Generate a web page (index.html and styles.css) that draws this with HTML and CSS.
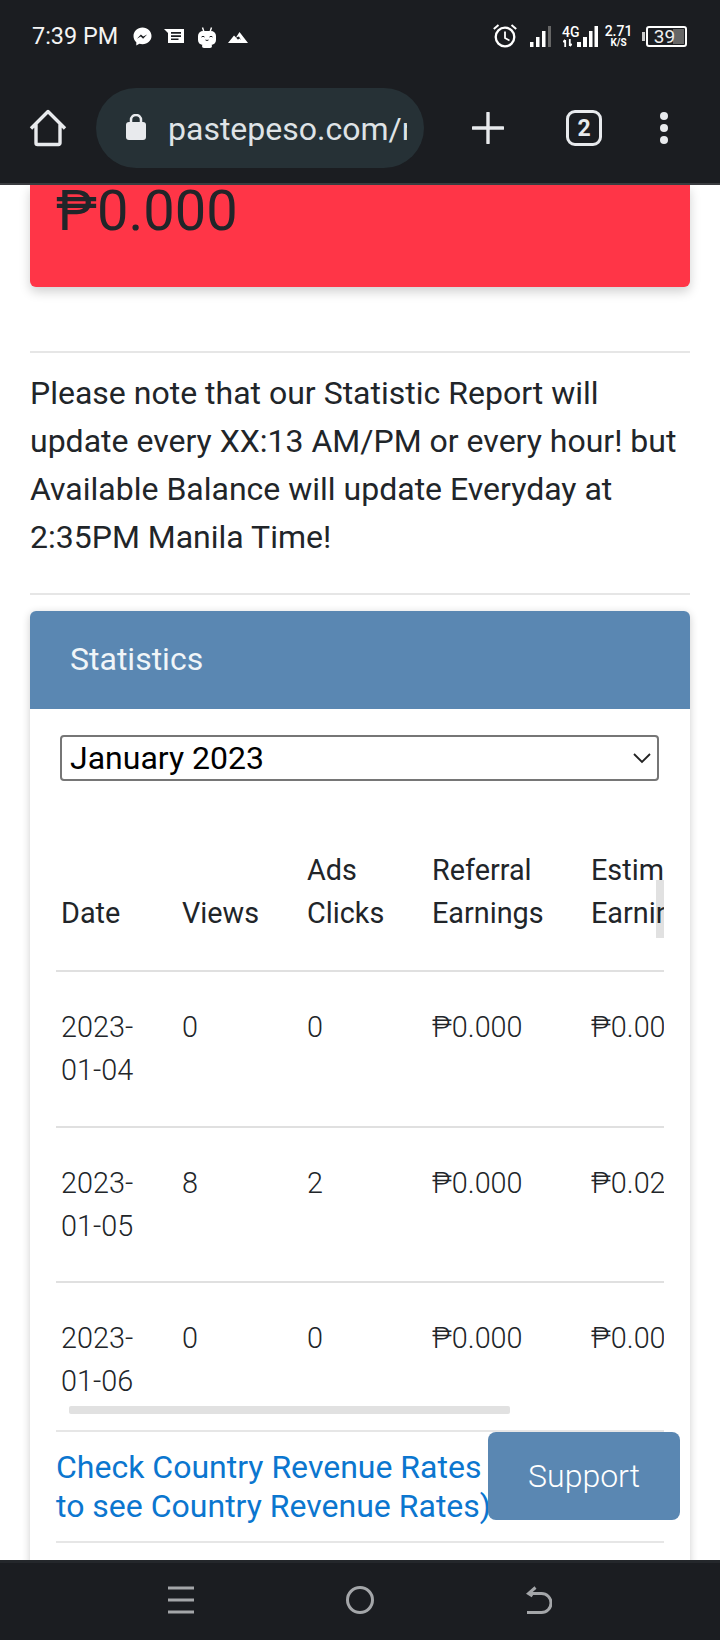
FILE: index.html
```html
<!DOCTYPE html>
<html lang="en">
  <head>
    <meta charset="UTF-8" />
    <meta name="viewport" content="width=device-width, initial-scale=1.0" />
    <title>statistics</title>
    <link rel="stylesheet" href="styles.css">
  </head>
  <body>
    <header class="chrome">
      <div class="status">
        <div class="status-left">
          <span class="clock">7:39 PM</span>
          <svg class="ic-messenger" width="19" height="19" viewBox="0 0 19 19"><path fill="#fff" d="M9.500 .5C4.400 .5 .5 4.200 .5 9c0 2.500 1 4.700 2.800 6.200v3.300l3.100-1.700c1 .3 2 .4 3.100 .4 5.100 0 9-3.700 9-8.200S14.600 .5 9.500 .5z"/><path fill="#1b1d21" d="M3.900 11.700l4-4.300 2.300 2.200 3.900-2.200-4 4.300-2.300-2.200z"/></svg>
          <svg class="ic-news" width="20" height="14" viewBox="0 0 20 14"><path fill="#fff" d="M0 0h20v14H4V4z"/><path fill="#1b1d21" d="M7 3h10v1.700H7zM7 6.200h10v1.700H7zM7 9.400h7.500v1.700H7z"/></svg>
          <svg class="ic-bot" width="18" height="21" viewBox="0 0 18 21"><path fill="none" stroke="#fff" stroke-width="1.400" d="M6 5L4.500 .5M12 5l1.500-4.500"/><rect fill="#fff" y="4" width="18" height="14" rx="5"/><rect fill="#fff" x="4" y="17" width="10" height="4" rx="2"/><path fill="none" stroke="#1b1d21" stroke-width="1" d="M3.500 10q1.500-1.500 3 0M11.500 10q1.500-1.500 3 0M7.500 13q1.500 1 3 0"/></svg>
          <svg class="ic-hills" width="20" height="11" viewBox="0 0 20 11"><path fill="#fff" d="M0 11L6 3.500 8 5.500 11.500 0 20 11z"/><path fill="#1b1d21" d="M8 5.500l2 2.300 1.300-1.300 1.700 1.500-2-3.500z"/></svg>
        </div>
        <div class="status-right">
          <svg class="ic-alarm" width="24" height="24" viewBox="0 0 24 24"><circle cx="12" cy="13" r="9.300" fill="none" stroke="#fff" stroke-width="2.300"/><path fill="none" stroke="#fff" stroke-width="1.800" d="M12 7.500V14l4.500 2.500"/><path fill="none" stroke="#fff" stroke-width="2" d="M.8 5L5.500 1M23.200 5L18.500 1"/></svg>
          <svg class="ic-signal" width="21" height="21" viewBox="0 0 21 21"><rect fill="#fff" x="0" y="16" width="3.500" height="5"/><rect fill="#fff" x="6" y="11" width="3.500" height="10"/><rect fill="#fff" x="12" y="5" width="3.500" height="16"/><rect fill="#666" x="18" y="0" width="3" height="21"/></svg>
          <div class="net">
            <span class="net-type">4G</span>
            <svg class="net-arrows" width="9" height="8" viewBox="0 0 9 8"><path fill="none" stroke="#fff" stroke-width="1.800" d="M2.200 8V1M.2 3L2.200 1M6.800 0v7M8.800 5L6.800 7"/></svg>
          </div>
          <svg class="ic-signal2" width="21" height="21" viewBox="0 0 21 21"><rect fill="#fff" x="0" y="16" width="4" height="5"/><rect fill="#fff" x="6" y="11" width="4" height="10"/><rect fill="#fff" x="12" y="5" width="3.500" height="16"/><rect fill="#fff" x="17.500" y="0" width="3.500" height="21"/></svg>
          <div class="speed"><span>2.71</span><span class="speed-unit">K/S</span></div>
          <div class="battery"><span class="battery-fill"></span><span class="battery-num">39</span></div>
        </div>
      </div>
      <div class="toolbar">
        <svg class="tool-home" width="38" height="38" viewBox="0 0 38 38"><path fill="none" stroke="#e8eaed" stroke-width="3.400" stroke-linejoin="round" d="M2 19.500L19 2.500l17 17M7 15.500V34a1.500 1.500 0 0 0 1.500 1.500h21a1.500 1.500 0 0 0 1.500-1.500V15.500"/></svg>
        <div class="url-pill">
          <svg width="20" height="26" viewBox="0 0 20 26"><rect fill="#e8eaed" y="8" width="20" height="18" rx="3"/><path fill="none" stroke="#e8eaed" stroke-width="2.500" d="M5 9V6a5 5 0 0 1 10 0v3"/></svg>
          <span class="url-text">pastepeso.com/r</span>
        </div>
        <svg class="tool-plus" width="32" height="32" viewBox="0 0 32 32"><path fill="none" stroke="#e8eaed" stroke-width="3.400" stroke-linecap="round" d="M16 1v30M1 16h30"/></svg>
        <div class="tool-tabs">2</div>
        <div class="tool-menu"><i></i><i></i><i></i></div>
      </div>
    </header>

    <main class="page">
      <div class="alert-box">₱0.000</div>
      <hr class="rule rule-first" />
      <p class="note">Please note that our Statistic Report will update every XX:13 AM/PM or every hour! but Available Balance will update Everyday at 2:35PM Manila Time!</p>
      <hr class="rule" />

      <section class="stats-card">
        <div class="stats-head">Statistics</div>
        <div class="stats-body">
          <div class="select-wrap">
            <select class="month-select">
              <option>January 2023</option>
            </select>
            <svg class="select-arrow" width="18" height="11" viewBox="0 0 18 11"><path fill="none" stroke="#222" stroke-width="1.800" d="M1 1l8 8 8-8"/></svg>
          </div>
          <div class="table-wrap">
            <span class="scroll-v"></span>
            <span class="scroll-h"></span>
            <table class="stats-table">
              <thead>
                <tr>
                  <th class="col-date">Date</th>
                  <th class="col-views">Views</th>
                  <th class="col-ads">Ads<br />Clicks</th>
                  <th class="col-ref">Referral<br />Earnings</th>
                  <th class="col-est">Estimated<br />Earnings</th>
                </tr>
              </thead>
              <tbody>
                <tr><td>2023-<br />01-04</td><td>0</td><td>0</td><td>₱0.000</td><td>₱0.000</td></tr>
                <tr><td>2023-<br />01-05</td><td>8</td><td>2</td><td>₱0.000</td><td>₱0.024</td></tr>
                <tr><td>2023-<br />01-06</td><td>0</td><td>0</td><td>₱0.000</td><td>₱0.000</td></tr>
              </tbody>
            </table>
          </div>
          <hr class="rule rule-tight" />
          <a class="rates-link" href="#">Check Country Revenue Rates (Click here to see Country Revenue Rates)</a>
          <hr class="rule rule-tight" />
        </div>
      </section>
      <button class="support-btn" type="button">Support</button>
    </main>

    <nav class="navbar">
      <svg width="26" height="28" viewBox="0 0 26 28"><path fill="none" stroke="#a4a6a9" stroke-width="3" d="M0 2h26M0 14h26M0 26h26"/></svg>
      <svg width="28" height="28" viewBox="0 0 28 28"><circle cx="14" cy="14" r="12.500" fill="none" stroke="#a4a6a9" stroke-width="3"/></svg>
      <svg width="26" height="28" viewBox="0 0 26 28"><path fill="none" stroke="#a4a6a9" stroke-width="3" d="M1 26.500h14.500a9.500 9.500 0 0 0 0-19H3M9.500 1.500L2.500 7.500l4 2.500"/></svg>
    </nav>
  </body>
</html>
```

FILE: styles.css
```css
* {
  box-sizing: border-box;
}

body {
  margin: 0;
  width: 720px;
  height: 1640px;
  display: flex;
  flex-direction: column;
  overflow: hidden;
  font-family: Roboto, "Liberation Sans", sans-serif;
  color: #212529;
  background-color: #fff;
}

/* phone + browser chrome */
.chrome {
  height: 185px;
  background-color: #1b1d21;
  border-bottom: 2px solid #3a3c40;
  color: #fff;
}

.status {
  height: 72px;
  padding: 0 33px 0 32px;
  display: flex;
  justify-content: space-between;
  align-items: center;
}

.status-left {
  display: flex;
  align-items: center;
}

.clock {
  font-size: 23.4px;
  margin-right: 15px;
  color: #f4f4f4;
}

.ic-news {
  margin-left: 12px;
}

.ic-bot {
  margin-left: 14px;
  margin-top: 3px;
}

.ic-hills {
  margin-left: 12px;
  margin-top: 2px;
}

.status-right {
  display: flex;
  align-items: center;
  height: 24px;
}

.ic-signal {
  margin-left: 13px;
}

.net {
  margin-left: 11px;
  width: 16px;
  display: flex;
  flex-direction: column;
  line-height: 12px;
}

.net-type {
  font-size: 14px;
  font-weight: 500;
  height: 13px;
  white-space: nowrap;
}

.net-arrows {
  margin-left: 1px;
}

.ic-signal2 {
  margin-left: -1px;
}

.speed {
  margin-left: 7px;
  width: 27px;
  display: flex;
  flex-direction: column;
  align-items: center;
  font-size: 14px;
  font-weight: 500;
  line-height: 13px;
}

.speed-unit {
  font-size: 10px;
  line-height: 9px;
  font-weight: 700;
}

.battery {
  position: relative;
  margin-left: 14px;
  width: 41px;
  height: 21px;
  border: 2px solid #fff;
  border-radius: 3px;
  display: flex;
  justify-content: center;
  align-items: center;
}

.battery::before {
  content: "";
  position: absolute;
  left: -6px;
  top: 4px;
  width: 3px;
  height: 9px;
  background-color: #ccc;
}

.battery-fill {
  position: absolute;
  right: 1px;
  top: 1px;
  bottom: 1px;
  width: 11px;
  background-color: #666;
}

.battery-num {
  position: relative;
  font-size: 19px;
  color: #eee;
  margin-left: -4px;
}

.toolbar {
  height: 80px;
  margin-top: 16px;
  display: flex;
  align-items: center;
  position: relative;
}

.tool-home {
  margin-left: 29px;
}

.url-pill {
  margin-left: 29px;
  width: 328px;
  height: 80px;
  border-radius: 40px;
  background-color: #263136;
  padding: 0 17px 0 30px;
  display: flex;
  align-items: center;
}

.url-pill svg {
  flex-shrink: 0;
  margin-right: 22px;
  margin-top: -2px;
}

.url-text {
  padding-top: 2px;
  font-size: 32px;
  color: #dfe3e6;
  white-space: nowrap;
  overflow: hidden;
}

.tool-plus {
  margin-left: 48px;
}

.tool-tabs {
  margin-left: 62px;
  width: 36px;
  height: 36px;
  border: 3.500px solid #e8eaed;
  border-radius: 9px;
  font-size: 23px;
  font-weight: 700;
  color: #e8eaed;
  display: flex;
  justify-content: center;
  align-items: center;
}

.tool-menu {
  margin-left: 58px;
  display: flex;
  flex-direction: column;
  gap: 4px;
}

.tool-menu i {
  width: 8px;
  height: 8px;
  border-radius: 50%;
  background-color: #e8eaed;
}

/* page */
.page {
  position: relative;
  flex: 1;
  overflow: hidden;
  padding: 0 30px;
}

.alert-box {
  height: 102px;
  padding: 0 26px;
  font-size: 56px;
  line-height: 52px;
  color: #212529;
  background-color: #ff3547;
  border-radius: 0 0 6px 6px;
  box-shadow: 0 5px 11px rgba(0, 0, 0, 0.18);
}

.rule {
  border: 0;
  border-top: 2px solid #e6e6e6;
  margin: 0;
}

.rule-first {
  margin-top: 64px;
}

.note {
  margin: 16px 0 32px;
  font-size: 32px;
  line-height: 48px;
}

.stats-card {
  margin-top: 16px;
  border-radius: 6px;
  background-color: #fff;
  box-shadow: 0 2px 8px rgba(0, 0, 0, 0.2);
}

.stats-head {
  height: 98px;
  padding: 0 40px 2px;
  display: flex;
  align-items: center;
  font-size: 32px;
  color: #f0f5f8;
  background-color: #5a87b2;
  border-radius: 6px 6px 0 0;
}

.stats-body {
  padding: 26px 26px 40px;
}

.select-wrap {
  position: relative;
  margin-left: 4px;
  width: 599px;
}

.month-select {
  display: block;
  width: 100%;
  height: 46px;
  padding: 0 8px;
  appearance: none;
  font-family: Roboto, sans-serif;
  font-size: 32px;
  color: #000;
  background-color: #fff;
  border: 2px solid #767676;
  border-radius: 4px;
}

.select-arrow {
  position: absolute;
  right: 8px;
  top: 18px;
}

.table-wrap {
  position: relative;
  height: 634px;
  overflow: hidden;
}

.stats-table {
  position: relative;
  width: 800px;
  table-layout: fixed;
  border-collapse: collapse;
  font-size: 28.8px;
  line-height: 43px;
}

.stats-table th {
  padding: 68px 6px 35px;
  text-align: left;
  font-weight: 400;
  vertical-align: bottom;
  white-space: nowrap;
  border-bottom: 2px solid #e0e0e0;
}

.stats-table td {
  padding: 34px 6px 33.500px;
  font-weight: 300;
  vertical-align: top;
  border-bottom: 2px solid #e0e0e0;
}

.stats-table th:first-child,
.stats-table td:first-child {
  padding-left: 5px;
}

.col-date { width: 120px; }
.col-views { width: 125px; }
.col-ads { width: 125px; }
.col-ref { width: 159px; }
.col-est { width: 271px; }

.scroll-v {
  position: absolute;
  right: 0;
  top: 99px;
  width: 8px;
  height: 58px;
  background-color: #e1e1e1;
}

.scroll-h {
  position: absolute;
  left: 13px;
  top: 625px;
  width: 441px;
  height: 8px;
  background-color: #e1e1e1;
  border-radius: 2px;
}

.rule-tight {
  margin-top: 15px;
}

.rates-link {
  display: block;
  padding: 16px 0 15px;
  font-size: 32px;
  line-height: 39px;
  color: #0b76cf;
  text-decoration: none;
}

.rates-link + .rule-tight {
  margin-top: 0;
}

.support-btn {
  position: absolute;
  left: 488px;
  top: 1247px;
  width: 192px;
  height: 88px;
  font-family: Roboto, sans-serif;
  font-size: 32px;
  font-weight: 300;
  color: #fff;
  background-color: #5a87b2;
  border: none;
  border-radius: 8px;
}

/* android nav bar */
.navbar {
  height: 80px;
  flex-shrink: 0;
  padding-bottom: 3px;
  display: flex;
  align-items: center;
  background-color: #1b1d21;
  border-top: 3px solid #24272b;
  justify-content: center;
  gap: 152px;
}
```
